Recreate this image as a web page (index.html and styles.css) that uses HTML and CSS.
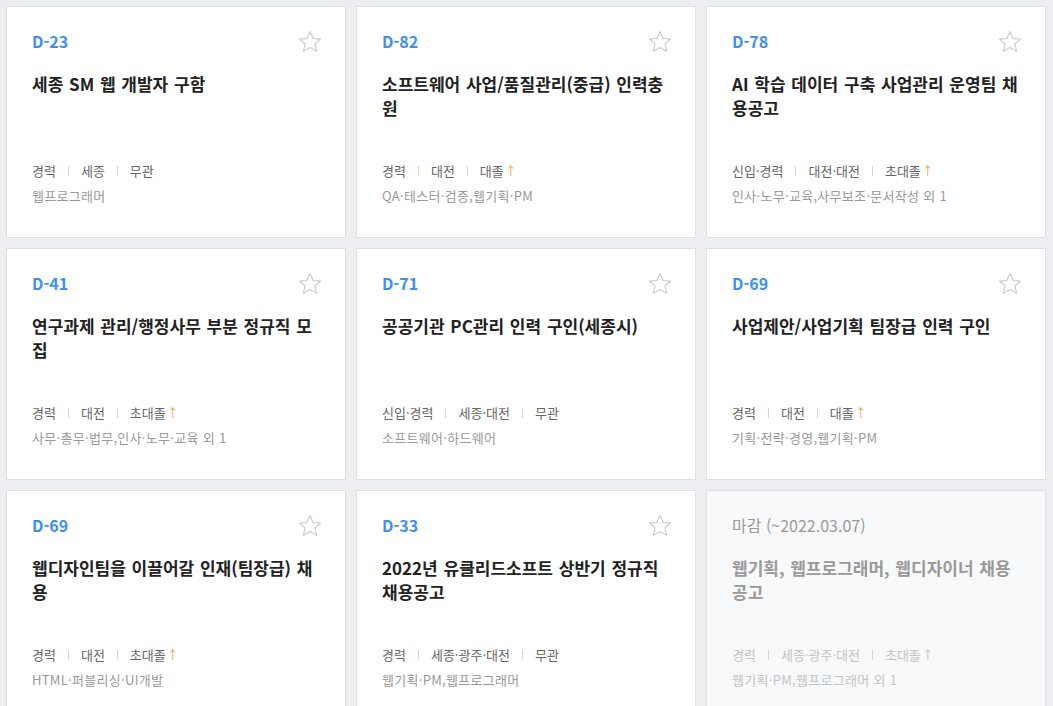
FILE: index.html
```html
<!DOCTYPE html>
<html lang="ko">
<head>
<meta charset="utf-8">
<title>채용공고</title>
<link rel="stylesheet" href="styles.css">
</head>
<body>
<div class="grid">

  <div class="card">
    <div class="head"><span class="dday">D-23</span><svg class="star" viewBox="0 0 24 24"><path d="M12 1.5l3.1 7 7.4.6-5.6 4.9 1.7 7.4L12 17.5l-6.6 3.9 1.7-7.4-5.6-4.9 7.4-.6z"/></svg></div>
    <h3 class="title">세종 SM 웹 개발자 구함</h3>
    <div class="meta"><span>경력</span><i class="sep"></i><span>세종</span><i class="sep"></i><span>무관</span></div>
    <div class="tags">웹프로그래머</div>
  </div>

  <div class="card">
    <div class="head"><span class="dday">D-82</span><svg class="star" viewBox="0 0 24 24"><path d="M12 1.5l3.1 7 7.4.6-5.6 4.9 1.7 7.4L12 17.5l-6.6 3.9 1.7-7.4-5.6-4.9 7.4-.6z"/></svg></div>
    <h3 class="title">소프트웨어 사업/품질관리(중급) 인력충원</h3>
    <div class="meta"><span>경력</span><i class="sep"></i><span>대전</span><i class="sep"></i><span>대졸<b class="up">↑</b></span></div>
    <div class="tags">QA·테스터·검증,웹기획·PM</div>
  </div>

  <div class="card">
    <div class="head"><span class="dday">D-78</span><svg class="star" viewBox="0 0 24 24"><path d="M12 1.5l3.1 7 7.4.6-5.6 4.9 1.7 7.4L12 17.5l-6.6 3.9 1.7-7.4-5.6-4.9 7.4-.6z"/></svg></div>
    <h3 class="title">AI 학습 데이터 구축 사업관리 운영팀 채용공고</h3>
    <div class="meta"><span>신입·경력</span><i class="sep"></i><span>대전·대전</span><i class="sep"></i><span>초대졸<b class="up">↑</b></span></div>
    <div class="tags">인사·노무·교육,사무보조·문서작성 외 1</div>
  </div>

  <div class="card">
    <div class="head"><span class="dday">D-41</span><svg class="star" viewBox="0 0 24 24"><path d="M12 1.5l3.1 7 7.4.6-5.6 4.9 1.7 7.4L12 17.5l-6.6 3.9 1.7-7.4-5.6-4.9 7.4-.6z"/></svg></div>
    <h3 class="title">연구과제 관리/행정사무 부분 정규직 모집</h3>
    <div class="meta"><span>경력</span><i class="sep"></i><span>대전</span><i class="sep"></i><span>초대졸<b class="up">↑</b></span></div>
    <div class="tags">사무·총무·법무,인사·노무·교육 외 1</div>
  </div>

  <div class="card">
    <div class="head"><span class="dday">D-71</span><svg class="star" viewBox="0 0 24 24"><path d="M12 1.5l3.1 7 7.4.6-5.6 4.9 1.7 7.4L12 17.5l-6.6 3.9 1.7-7.4-5.6-4.9 7.4-.6z"/></svg></div>
    <h3 class="title">공공기관 PC관리 인력 구인(세종시)</h3>
    <div class="meta"><span>신입·경력</span><i class="sep"></i><span>세종·대전</span><i class="sep"></i><span>무관</span></div>
    <div class="tags">소프트웨어·하드웨어</div>
  </div>

  <div class="card">
    <div class="head"><span class="dday">D-69</span><svg class="star" viewBox="0 0 24 24"><path d="M12 1.5l3.1 7 7.4.6-5.6 4.9 1.7 7.4L12 17.5l-6.6 3.9 1.7-7.4-5.6-4.9 7.4-.6z"/></svg></div>
    <h3 class="title">사업제안/사업기획 팀장급 인력 구인</h3>
    <div class="meta"><span>경력</span><i class="sep"></i><span>대전</span><i class="sep"></i><span>대졸<b class="up">↑</b></span></div>
    <div class="tags">기획·전략·경영,웹기획·PM</div>
  </div>

  <div class="card">
    <div class="head"><span class="dday">D-69</span><svg class="star" viewBox="0 0 24 24"><path d="M12 1.5l3.1 7 7.4.6-5.6 4.9 1.7 7.4L12 17.5l-6.6 3.9 1.7-7.4-5.6-4.9 7.4-.6z"/></svg></div>
    <h3 class="title">웹디자인팀을 이끌어갈 인재(팀장급) 채용</h3>
    <div class="meta"><span>경력</span><i class="sep"></i><span>대전</span><i class="sep"></i><span>초대졸<b class="up">↑</b></span></div>
    <div class="tags">HTML·퍼블리싱·UI개발</div>
  </div>

  <div class="card">
    <div class="head"><span class="dday">D-33</span><svg class="star" viewBox="0 0 24 24"><path d="M12 1.5l3.1 7 7.4.6-5.6 4.9 1.7 7.4L12 17.5l-6.6 3.9 1.7-7.4-5.6-4.9 7.4-.6z"/></svg></div>
    <h3 class="title">2022년 유클리드소프트 상반기 정규직 채용공고</h3>
    <div class="meta"><span>경력</span><i class="sep"></i><span>세종·광주·대전</span><i class="sep"></i><span>무관</span></div>
    <div class="tags">웹기획·PM,웹프로그래머</div>
  </div>

  <div class="card closed">
    <div class="head"><span class="deadline">마감 (~2022.03.07)</span></div>
    <h3 class="title">웹기획, 웹프로그래머, 웹디자이너 채용공고</h3>
    <div class="meta"><span>경력</span><i class="sep"></i><span>세종·광주·대전</span><i class="sep"></i><span>초대졸<b class="up">↑</b></span></div>
    <div class="tags">웹기획·PM,웹프로그래머 외 1</div>
  </div>

</div>
</body>
</html>
```

FILE: styles.css
```css
html {
  overflow: hidden;
}
body {
  margin: 0;
  padding: 6px 7px 6px 6px;
  background: #eceef1;
  font-family: "Noto Sans CJK KR", sans-serif;
  color: #222;
}
.grid {
  display: grid;
  grid-template-columns: repeat(3, 340px);
  gap: 10px;
}
.card {
  box-sizing: border-box;
  height: 232px;
  background: #fff;
  border: 1px solid #dfe1e5;
  padding: 22px 23px 0 25px;
  display: flex;
  flex-direction: column;
}
.head {
  display: flex;
  justify-content: space-between;
  align-items: center;
  height: 24px;
}
.dday {
  font-size: 16px;
  font-weight: 700;
  color: #3d8ff7;
  line-height: 22px;
}
.star {
  width: 24px;
  height: 24px;
  margin-top: 2px;
  fill: none;
  stroke: #c9c9c9;
  stroke-width: 1.1;
  stroke-linejoin: round;
}
.title {
  margin: 19px 0 0;
  height: 48px;
  font-size: 17px;
  font-weight: 700;
  line-height: 24px;
  word-spacing: 1px;
  color: #222;
}
.meta {
  margin-top: 41px;
  font-size: 13px;
  line-height: 20px;
  color: #666;
  display: flex;
  align-items: center;
}
.sep {
  display: inline-block;
  width: 1px;
  height: 10px;
  background: #d6d6d6;
  margin: 0 12px;
}
.up {
  font-weight: 400;
  font-size: 12px;
  color: #e3a450;
  margin-left: 1px;
}
.tags {
  margin-top: 5px;
  font-size: 13px;
  line-height: 20px;
  letter-spacing: 0.3px;
  color: #999;
}
.closed {
  background: #f8f9fb;
}
.closed .deadline {
  font-size: 16px;
  line-height: 22px;
  color: #999;
}
.closed .title {
  color: #999;
}
.closed .meta,
.closed .tags {
  color: #c4c4c4;
}
.closed .up {
  color: #c4c4c4;
}
```
